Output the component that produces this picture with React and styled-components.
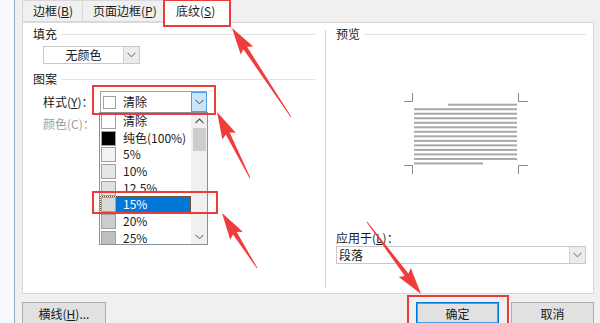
import styled, { createGlobalStyle } from 'styled-components';

const GlobalStyle = createGlobalStyle`
  html, body {
    margin: 0;
    padding: 0;
    background: #f0f0f0;
  }
  body {
    font-family: "Noto Sans CJK SC", "Microsoft YaHei", sans-serif;
    font-size: 12px;
    color: #1a1a1a;
  }
  * { box-sizing: border-box; }
`;

const patterns = [
    { label: '清除', color: '#ffffff' },
    { label: '纯色(100%)', color: '#000000' },
    { label: '5%', color: '#f2f2f2' },
    { label: '10%', color: '#e6e6e6' },
    { label: '12.5%', color: '#e0e0e0' },
    { label: '15%', color: '#d9d9d9', selected: true },
    { label: '20%', color: '#cccccc' },
    { label: '25%', color: '#bfbfbf' },
];

// red annotation arrows: tail -> tip
const arrows = [
    { from: [291, 117], to: [232, 28] },
    { from: [250, 178], to: [217, 112] },
    { from: [257, 268], to: [222, 213] },
    { from: [367, 222], to: [421, 294] },
];

const arrowPoints = ({ from, to }) => {
    const dx = to[0] - from[0];
    const dy = to[1] - from[1];
    const len = Math.hypot(dx, dy);
    const ux = dx / len;
    const uy = dy / len;
    const px = -uy;
    const py = ux;
    const headLen = 24;
    const bx = to[0] - ux * headLen;
    const by = to[1] - uy * headLen;
    const wx = to[0] - ux * (headLen + 3);
    const wy = to[1] - uy * (headLen + 3);
    const pts = [
        [from[0] + px * 0.4, from[1] + py * 0.4],
        [bx + px * 2.2, by + py * 2.2],
        [wx + px * 7.5, wy + py * 7.5],
        [to[0], to[1]],
        [wx - px * 7.5, wy - py * 7.5],
        [bx - px * 2.2, by - py * 2.2],
        [from[0] - px * 0.4, from[1] - py * 0.4],
    ];
    return pts.map((p) => p.map((v) => v.toFixed(1)).join(',')).join(' ');
};

const ChevronDown = ({ color = '#606060' }) => (
    <svg width="9" height="6" viewBox="0 0 9 6">
        <path d="M0.5 0.8 L4.5 4.8 L8.5 0.8" fill="none" stroke={color} strokeWidth="1" />
    </svg>
);

const ChevronUp = () => (
    <svg width="9" height="6" viewBox="0 0 9 6">
        <path d="M0.5 5.2 L4.5 1.2 L8.5 5.2" fill="none" stroke="#505050" strokeWidth="1.2" />
    </svg>
);

const Preview = () => {
    const lines = [];
    for (let i = 0; i < 14; i++) {
        const y = 11.7 + 4.52 * i;
        let x1 = 10;
        let x2 = 113;
        if (i === 0) x1 = 44;
        if (i === 13) x2 = 79;
        lines.push(<rect key={i} x={x1} y={y} width={x2 - x1} height="2" fill="#a8a8a8" />);
    }
    return (
        <PreviewSvg width="126" height="82" viewBox="0 0 126 82">
            <g stroke="#8a8a8a" strokeWidth="1" fill="none">
                <path d="M8.5 1 V9.5 H0" />
                <path d="M114.5 1 V9.5 H124" />
                <path d="M0 73.5 H8.5 V82" />
                <path d="M124 73.5 H114.5 V82" />
            </g>
            {lines}
        </PreviewSvg>
    );
};

const App = () => {
    return (
        <>
            <GlobalStyle />
            <Screen>
                <LeftStrip />
                <Main>
                    <TabRow>
                        <Tab $w={61}>
                            边框(<Key>B</Key>)
                        </Tab>
                        <Tab $w={82}>
                            页面边框(<Key>P</Key>)
                        </Tab>
                        <Tab $w={67} $active>
                            底纹(<Key>S</Key>)
                        </Tab>
                    </TabRow>

                    <Panel>
                        <LeftCol>
                            <SectionHeader>填充</SectionHeader>
                            <FillSelect>
                                <FillText>无颜色</FillText>
                                <ArrowBox>
                                    <ChevronDown />
                                </ArrowBox>
                            </FillSelect>

                            <SectionHeader $top={7}>图案</SectionHeader>
                            <FieldRow $top={4}>
                                <FieldLabel>
                                    样式(<Key>Y</Key>)：
                                </FieldLabel>
                                <ComboWrap>
                                    <Combo>
                                        <Swatch $color="#ffffff" $size={13} />
                                        <ComboText>清除</ComboText>
                                        <ComboArrow>
                                            <ChevronDown color="#404040" />
                                        </ComboArrow>
                                    </Combo>
                                    <DropList>
                                        <Items>
                                            {patterns.map((p) => (
                                                <Item key={p.label} $selected={p.selected}>
                                                    <Swatch $color={p.color} $size={15} />
                                                    <ItemLabel $selected={p.selected}>{p.label}</ItemLabel>
                                                </Item>
                                            ))}
                                        </Items>
                                        <ScrollBar>
                                            <ScrollBtn>
                                                <ChevronUp />
                                            </ScrollBtn>
                                            <Thumb />
                                            <ScrollSpacer />
                                            <ScrollBtn>
                                                <ChevronDown color="#505050" />
                                            </ScrollBtn>
                                        </ScrollBar>
                                    </DropList>
                                </ComboWrap>
                            </FieldRow>
                            <FieldRow $top={3}>
                                <FieldLabel $disabled>颜色(C)：</FieldLabel>
                            </FieldRow>
                        </LeftCol>

                        <Divider />

                        <RightCol>
                            <SectionHeader>预览</SectionHeader>
                            <Preview />
                            <ApplyBlock>
                                <ApplyLabel>
                                    应用于(<Key>L</Key>)：
                                </ApplyLabel>
                                <ApplySelect>
                                    <ApplyText>段落</ApplyText>
                                    <ArrowBox>
                                        <ChevronDown />
                                    </ArrowBox>
                                </ApplySelect>
                            </ApplyBlock>
                        </RightCol>
                    </Panel>

                    <Footer>
                        <Button $w={84}>
                            横线(<Key>H</Key>)...
                        </Button>
                        <FooterRight>
                            <Button $w={83} $primary>
                                确定
                            </Button>
                            <Button $w={83}>取消</Button>
                        </FooterRight>
                    </Footer>
                </Main>

                <Annotations width="600" height="323" viewBox="0 0 600 323">
                    <g fill="none" stroke="#ec3b3b" strokeWidth="2">
                        <rect x="164" y="0" width="66" height="26" />
                        <rect x="93" y="86" width="122" height="28" />
                        <rect x="93" y="192" width="124" height="21" />
                        <rect x="408" y="296" width="100" height="28" />
                    </g>
                    {arrows.map((a, i) => (
                        <polygon key={i} points={arrowPoints(a)} fill="#ef3d3d" />
                    ))}
                </Annotations>
            </Screen>
        </>
    );
};

const Screen = styled.div`
    position: relative;
    width: 600px;
    height: 323px;
    overflow: hidden;
    display: flex;
    background: #f0f0f0;
`;

const LeftStrip = styled.div`
    width: 15px;
    flex: 0 0 15px;
    background: #f8f9fb;
    border-right: 1px solid #93aecd;
`;

const Main = styled.div`
    flex: 1;
    display: flex;
    flex-direction: column;
    padding: 0 6px 0 7px;
`;

const TabRow = styled.div`
    display: flex;
    align-items: flex-end;
    height: 22px;
    flex: 0 0 22px;
`;

const Tab = styled.div`
    position: relative;
    width: ${(p) => p.$w}px;
    height: ${(p) => (p.$active ? 25 : 22)}px;
    margin-left: -1px;
    margin-bottom: ${(p) => (p.$active ? -1 : 0)}px;
    padding-left: ${(p) => (p.$active ? 12 : 10)}px;
    padding-top: ${(p) => (p.$active ? 4 : 2)}px;
    background: ${(p) => (p.$active ? '#ffffff' : '#f0f0f0')};
    border: 1px solid #d9d9d9;
    border-bottom: ${(p) => (p.$active ? 'none' : '1px solid #d9d9d9')};
    z-index: ${(p) => (p.$active ? 1 : 0)};
    white-space: nowrap;
    line-height: 16px;
    &:first-child {
        margin-left: 0;
    }
`;

const Key = styled.span`
    text-decoration: underline;
    text-underline-offset: 1px;
`;

const Panel = styled.div`
    flex: 0 0 272px;
    display: flex;
    background: #ffffff;
    border: 1px solid #d9d9d9;
`;

const LeftCol = styled.div`
    width: 302px;
    flex: 0 0 302px;
    padding: 3px 10px 0 10px;
    display: flex;
    flex-direction: column;
`;

const SectionHeader = styled.div`
    display: flex;
    align-items: center;
    gap: 4px;
    height: 16px;
    line-height: 16px;
    margin-top: ${(p) => p.$top || 0}px;
    &::after {
        content: '';
        flex: 1;
        height: 1px;
        background: #e2e2e2;
    }
`;

const FillSelect = styled.div`
    display: flex;
    width: 97px;
    height: 18px;
    margin: 4px 0 0 10px;
    border: 1px solid #c9c9c9;
    background: #fff;
`;

const FillText = styled.div`
    flex: 1;
    text-align: center;
    line-height: 16px;
`;

const ArrowBox = styled.div`
    width: 16px;
    display: flex;
    align-items: center;
    justify-content: center;
    background: #ececec;
    border-left: 1px solid #d2d2d2;
`;

const FieldRow = styled.div`
    display: flex;
    align-items: center;
    margin-top: ${(p) => p.$top}px;
    padding-left: 10px;
`;

const FieldLabel = styled.div`
    width: 57px;
    flex: 0 0 57px;
    line-height: 16px;
    white-space: nowrap;
    color: ${(p) => (p.$disabled ? '#9d9d9d' : '#1a1a1a')};
`;

const ComboWrap = styled.div`
    position: relative;
`;

const Combo = styled.div`
    display: flex;
    align-items: center;
    width: 107px;
    height: 22px;
    padding-left: 2px;
    border: 1px solid #a3a3a3;
    background: #fff;
`;

const Swatch = styled.div`
    width: ${(p) => p.$size}px;
    height: ${(p) => p.$size}px;
    flex: 0 0 ${(p) => p.$size}px;
    background: ${(p) => p.$color};
    border: 1px solid #a0a0a0;
`;

const ComboText = styled.div`
    flex: 1;
    padding-left: 7px;
    line-height: 16px;
`;

const ComboArrow = styled.div`
    width: 16px;
    height: 20px;
    margin-right: -1px;
    display: flex;
    align-items: center;
    justify-content: center;
    background: #cce4f7;
    border: 1px solid #4e9ee0;
`;

const DropList = styled.div`
    position: absolute;
    top: 21px;
    left: -1px;
    width: 109px;
    height: 133px;
    display: flex;
    overflow: hidden;
    background: #fff;
    border: 1px solid #8a8f98;
    z-index: 2;
`;

const Items = styled.div`
    flex: 1;
    display: flex;
    flex-direction: column;
`;

const Item = styled.div`
    display: flex;
    align-items: center;
    height: 16.7px;
    flex: 0 0 16.7px;
    padding-left: 1px;
    outline: ${(p) => (p.$selected ? '1px dotted #6b4a2a' : 'none')};
    outline-offset: -1px;
`;

const ItemLabel = styled.div`
    flex: 1;
    height: 100%;
    padding-left: 7px;
    line-height: 16.7px;
    white-space: nowrap;
    background: ${(p) => (p.$selected ? '#0078d7' : 'transparent')};
    color: ${(p) => (p.$selected ? '#ffffff' : '#1a1a1a')};
`;

const ScrollBar = styled.div`
    width: 16px;
    flex: 0 0 16px;
    display: flex;
    flex-direction: column;
    align-items: center;
    background: #f0f0f0;
`;

const ScrollBtn = styled.div`
    height: 15px;
    width: 100%;
    display: flex;
    align-items: center;
    justify-content: center;
`;

const Thumb = styled.div`
    width: 13px;
    height: 23px;
    background: #cdcdcd;
`;

const ScrollSpacer = styled.div`
    flex: 1;
`;

const Divider = styled.div`
    width: 1px;
    margin: 7px 0 5px;
    background: #d6d6d6;
`;

const RightCol = styled.div`
    flex: 1;
    display: flex;
    flex-direction: column;
    padding: 3px 7px 0 10px;
`;

const PreviewSvg = styled.svg`
    display: block;
    margin: 50px 0 0 68px;
`;

const ApplyBlock = styled.div`
    margin-top: auto;
    padding-bottom: 29px;
`;

const ApplyLabel = styled.div`
    line-height: 16px;
`;

const ApplySelect = styled.div`
    display: flex;
    height: 18px;
    border: 1px solid #c9c9c9;
    background: #fff;
`;

const ApplyText = styled.div`
    flex: 1;
    padding-left: 2px;
    line-height: 16px;
`;

const Footer = styled.div`
    display: flex;
    justify-content: space-between;
    padding-top: 8px;
`;

const FooterRight = styled.div`
    display: flex;
    gap: 12px;
`;

const Button = styled.div`
    width: ${(p) => p.$w}px;
    height: 22px;
    display: flex;
    align-items: center;
    justify-content: center;
    background: #e1e1e1;
    border: 1px solid ${(p) => (p.$primary ? '#0078d7' : '#adadad')};
    box-shadow: ${(p) => (p.$primary ? 'inset 0 0 0 1px #4da0e6' : 'none')};
    white-space: nowrap;
`;

const Annotations = styled.svg`
    position: absolute;
    left: 0;
    top: 0;
    pointer-events: none;
    z-index: 5;
`;

export default App;
